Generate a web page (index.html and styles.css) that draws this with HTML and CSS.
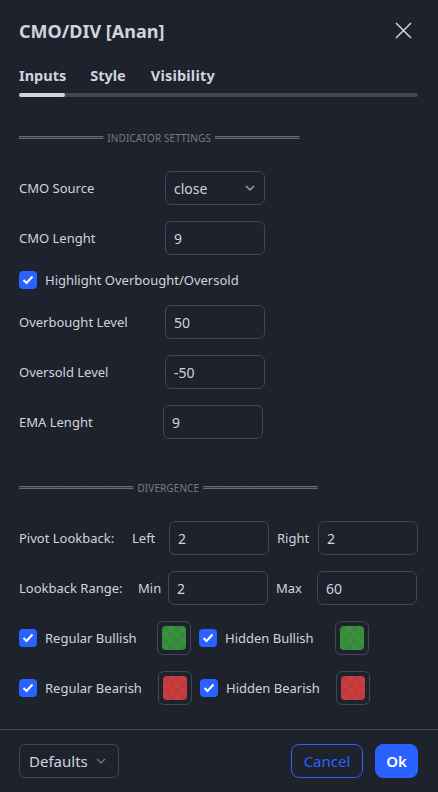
FILE: index.html
```html
<!DOCTYPE html>
<html>
<head>
<meta charset="utf-8">
<link rel="stylesheet" href="styles.css">
</head>
<body>
<div class="dialog">
  <div class="header">
    <div class="title">CMO/DIV [Anan]</div>
    <svg class="close" width="17" height="17" viewBox="0 0 17 17"><path d="M1 1L16 16M16 1L1 16" stroke="#d1d4dc" stroke-width="1.5" fill="none"/></svg>
  </div>
  <div class="tabs">
    <span class="tab">Inputs</span>
    <span class="tab">Style</span>
    <span class="tab">Visibility</span>
  </div>
  <div class="track"><div class="thumb"></div></div>

  <div class="content">
    <div class="sep s1"><span class="bar">══════════════</span><span class="septext">INDICATOR SETTINGS</span><span class="bar">══════════════</span></div>

    <div class="row r-first"><span class="label">CMO Source</span><div class="field select">close<svg class="chev" width="10" height="6" viewBox="0 0 10 6"><path d="M1 1l4 4 4-4" stroke="#b2b5be" stroke-width="1.2" fill="none"/></svg></div></div>
    <div class="row"><span class="label">CMO Lenght</span><div class="field">9</div></div>
    <div class="row cbrow"><span class="cb"><svg width="12" height="10" viewBox="0 0 12 10"><path d="M1.5 5l3 3 6-6.5" stroke="#fff" stroke-width="2" fill="none"/></svg></span><span class="cblabel">Highlight Overbought/Oversold</span></div>
    <div class="row"><span class="label">Overbought Level</span><div class="field">50</div></div>
    <div class="row"><span class="label">Oversold Level</span><div class="field">-50</div></div>
    <div class="row"><span class="label short">EMA Lenght</span><div class="field">9</div></div>

    <div class="sep s2"><span class="bar">═══════════════════</span><span class="septext">DIVERGENCE</span><span class="bar">═══════════════════</span></div>

    <div class="row r-first"><span class="rlabel">Pivot Lookback:</span><span class="sub sub-left">Left</span><div class="field">2</div><span class="sub sub-right">Right</span><div class="field">2</div></div>
    <div class="row"><span class="rlabel">Lookback Range:</span><span class="sub sub-min">Min</span><div class="field">2</div><span class="sub sub-max">Max</span><div class="field">60</div></div>

    <div class="row swrow">
      <span class="cb"><svg width="12" height="10" viewBox="0 0 12 10"><path d="M1.5 5l3 3 6-6.5" stroke="#fff" stroke-width="2" fill="none"/></svg></span><span class="cblabel w1">Regular Bullish</span>
      <span class="swatch"><span class="chip green"></span></span>
      <span class="cb"><svg width="12" height="10" viewBox="0 0 12 10"><path d="M1.5 5l3 3 6-6.5" stroke="#fff" stroke-width="2" fill="none"/></svg></span><span class="cblabel w2">Hidden Bullish</span>
      <span class="swatch"><span class="chip green"></span></span>
    </div>
    <div class="row swrow">
      <span class="cb"><svg width="12" height="10" viewBox="0 0 12 10"><path d="M1.5 5l3 3 6-6.5" stroke="#fff" stroke-width="2" fill="none"/></svg></span><span class="cblabel w1b">Regular Bearish</span>
      <span class="swatch"><span class="chip red"></span></span>
      <span class="cb"><svg width="12" height="10" viewBox="0 0 12 10"><path d="M1.5 5l3 3 6-6.5" stroke="#fff" stroke-width="2" fill="none"/></svg></span><span class="cblabel w2b">Hidden Bearish</span>
      <span class="swatch"><span class="chip red"></span></span>
    </div>
  </div>

  <div class="footer">
    <div class="field select defaults">Defaults<svg class="chev" width="10" height="6" viewBox="0 0 10 6"><path d="M1 1l4 4 4-4" stroke="#787b86" stroke-width="1.2" fill="none"/></svg></div>
    <div class="spacer"></div>
    <button class="btn cancel">Cancel</button>
    <button class="btn ok">Ok</button>
  </div>
</div>
</body>
</html>
```
FILE: styles.css
```css
* { box-sizing: border-box; }
html, body { margin: 0; padding: 0; background: #1e222d; }
body {
  width: 438px; height: 792px; overflow: hidden;
  font-family: "Noto Sans", "DejaVu Sans", sans-serif;
  color: #d1d4dc;
  font-size: 13px;
}
.dialog { width: 438px; height: 792px; display: flex; flex-direction: column; }
.header {
  display: flex; align-items: center; justify-content: space-between;
  padding: 18px 26px 0 19px; height: 43px;
}
.title { font-size: 18px; font-weight: 700; line-height: 24px; color: #d1d4dc; }
.close { display: block; }
.tabs { display: flex; padding: 0 19px; margin-top: 20px; height: 24px; align-items: center; }
.tab { font-size: 14.5px; font-weight: 700; color: #d1d4dc; }
.tab + .tab { margin-left: 24px; }
.tab:last-child { margin-left: 25px; letter-spacing: 0.2px; }
.track { margin: 6px 20px 0 19px; height: 4px; background: #434651; border-radius: 2px; }
.thumb { width: 46px; height: 4px; background: #d1d4dc; border-radius: 2px; }

.content { padding: 0 20px 0 19px; display: flex; flex-direction: column; flex: 1; }
.sep { display: flex; align-items: center; height: 16px; color: #787b86; font-size: 10px; }
.s1 { margin-top: 33px; }
.s2 { margin-top: 41px; }
.bar { font-family: "DejaVu Sans Mono", monospace; font-size: 10px; color: #787b86; letter-spacing: 0; line-height: 16px; }
.septext { padding: 0 4px; font-size: 10px; letter-spacing: 0.1px; }

.row { display: flex; align-items: center; height: 34px; margin-top: 16px; }
.r-first { margin-top: 25px; }
.cbrow { margin-top: 8px; }
.cbrow + .row { margin-top: 8px; }
.label { width: 146px; flex: none; }
.label.short { width: 144px; }
.field {
  width: 100px; height: 34px; flex: none;
  border: 1px solid #434651; border-radius: 6px;
  padding: 0 8px; display: flex; align-items: center;
  font-size: 14px; color: #d1d4dc;
}
.select { justify-content: space-between; }
.select .chev { margin-right: 1px; }

.cb {
  width: 18px; height: 18px; flex: none; border-radius: 4px; background: #2962ff;
  display: flex; align-items: center; justify-content: center;
}
.cblabel { margin-left: 8px; }
.rlabel { width: 113px; flex: none; }
.sub { flex: none; }
.sub-left { width: 37px; }
.sub-right { margin-left: 8px; width: 41px; }
.sub-min { margin-left: 6px; width: 30px; }
.sub-max { margin-left: 8px; width: 41px; }

.swrow { height: 34px; }
.swrow + .swrow { margin-top: 16px; }
.row.swrow:first-of-type { margin-top: 17px; }
.w1 { width: 112px; }
.w2 { width: 110px; }
.w1b { width: 113px; }
.w2b { width: 110px; }
.swatch {
  width: 34px; height: 34px; flex: none; margin-right: 8px;
  border: 1px solid #434651; border-radius: 6px;
  display: flex; align-items: center; justify-content: center;
}
.chip { width: 24px; height: 24px; border-radius: 4px; }
.chip.green {
  background-color: #388e3c;
  background-image: conic-gradient(#3a903e 25%, #368b3a 0 50%, #3a903e 0 75%, #368b3a 0);
  background-size: 12px 12px;
}
.chip.red {
  background-color: #c43c3c;
  background-image: conic-gradient(#c63e3e 25%, #c03a3a 0 50%, #c63e3e 0 75%, #c03a3a 0);
  background-size: 12px 12px;
}

.footer {
  border-top: 1px solid #434651;
  height: 63px; flex: none;
  display: flex; align-items: center; padding: 0 20px 0 19px;
}
.defaults { font-size: 15px; padding-left: 9px; padding-right: 11px; }
.spacer { flex: 1; }
.btn {
  height: 34px; border-radius: 8px; font-family: inherit; font-size: 15px;
  padding: 0; cursor: pointer;
}
.cancel { width: 72px; background: transparent; border: 1px solid #2962ff; color: #2962ff; margin-right: 12px; }
.ok { width: 43px; background: #2962ff; border: 1px solid #2962ff; color: #fff; font-weight: 600; }
```
